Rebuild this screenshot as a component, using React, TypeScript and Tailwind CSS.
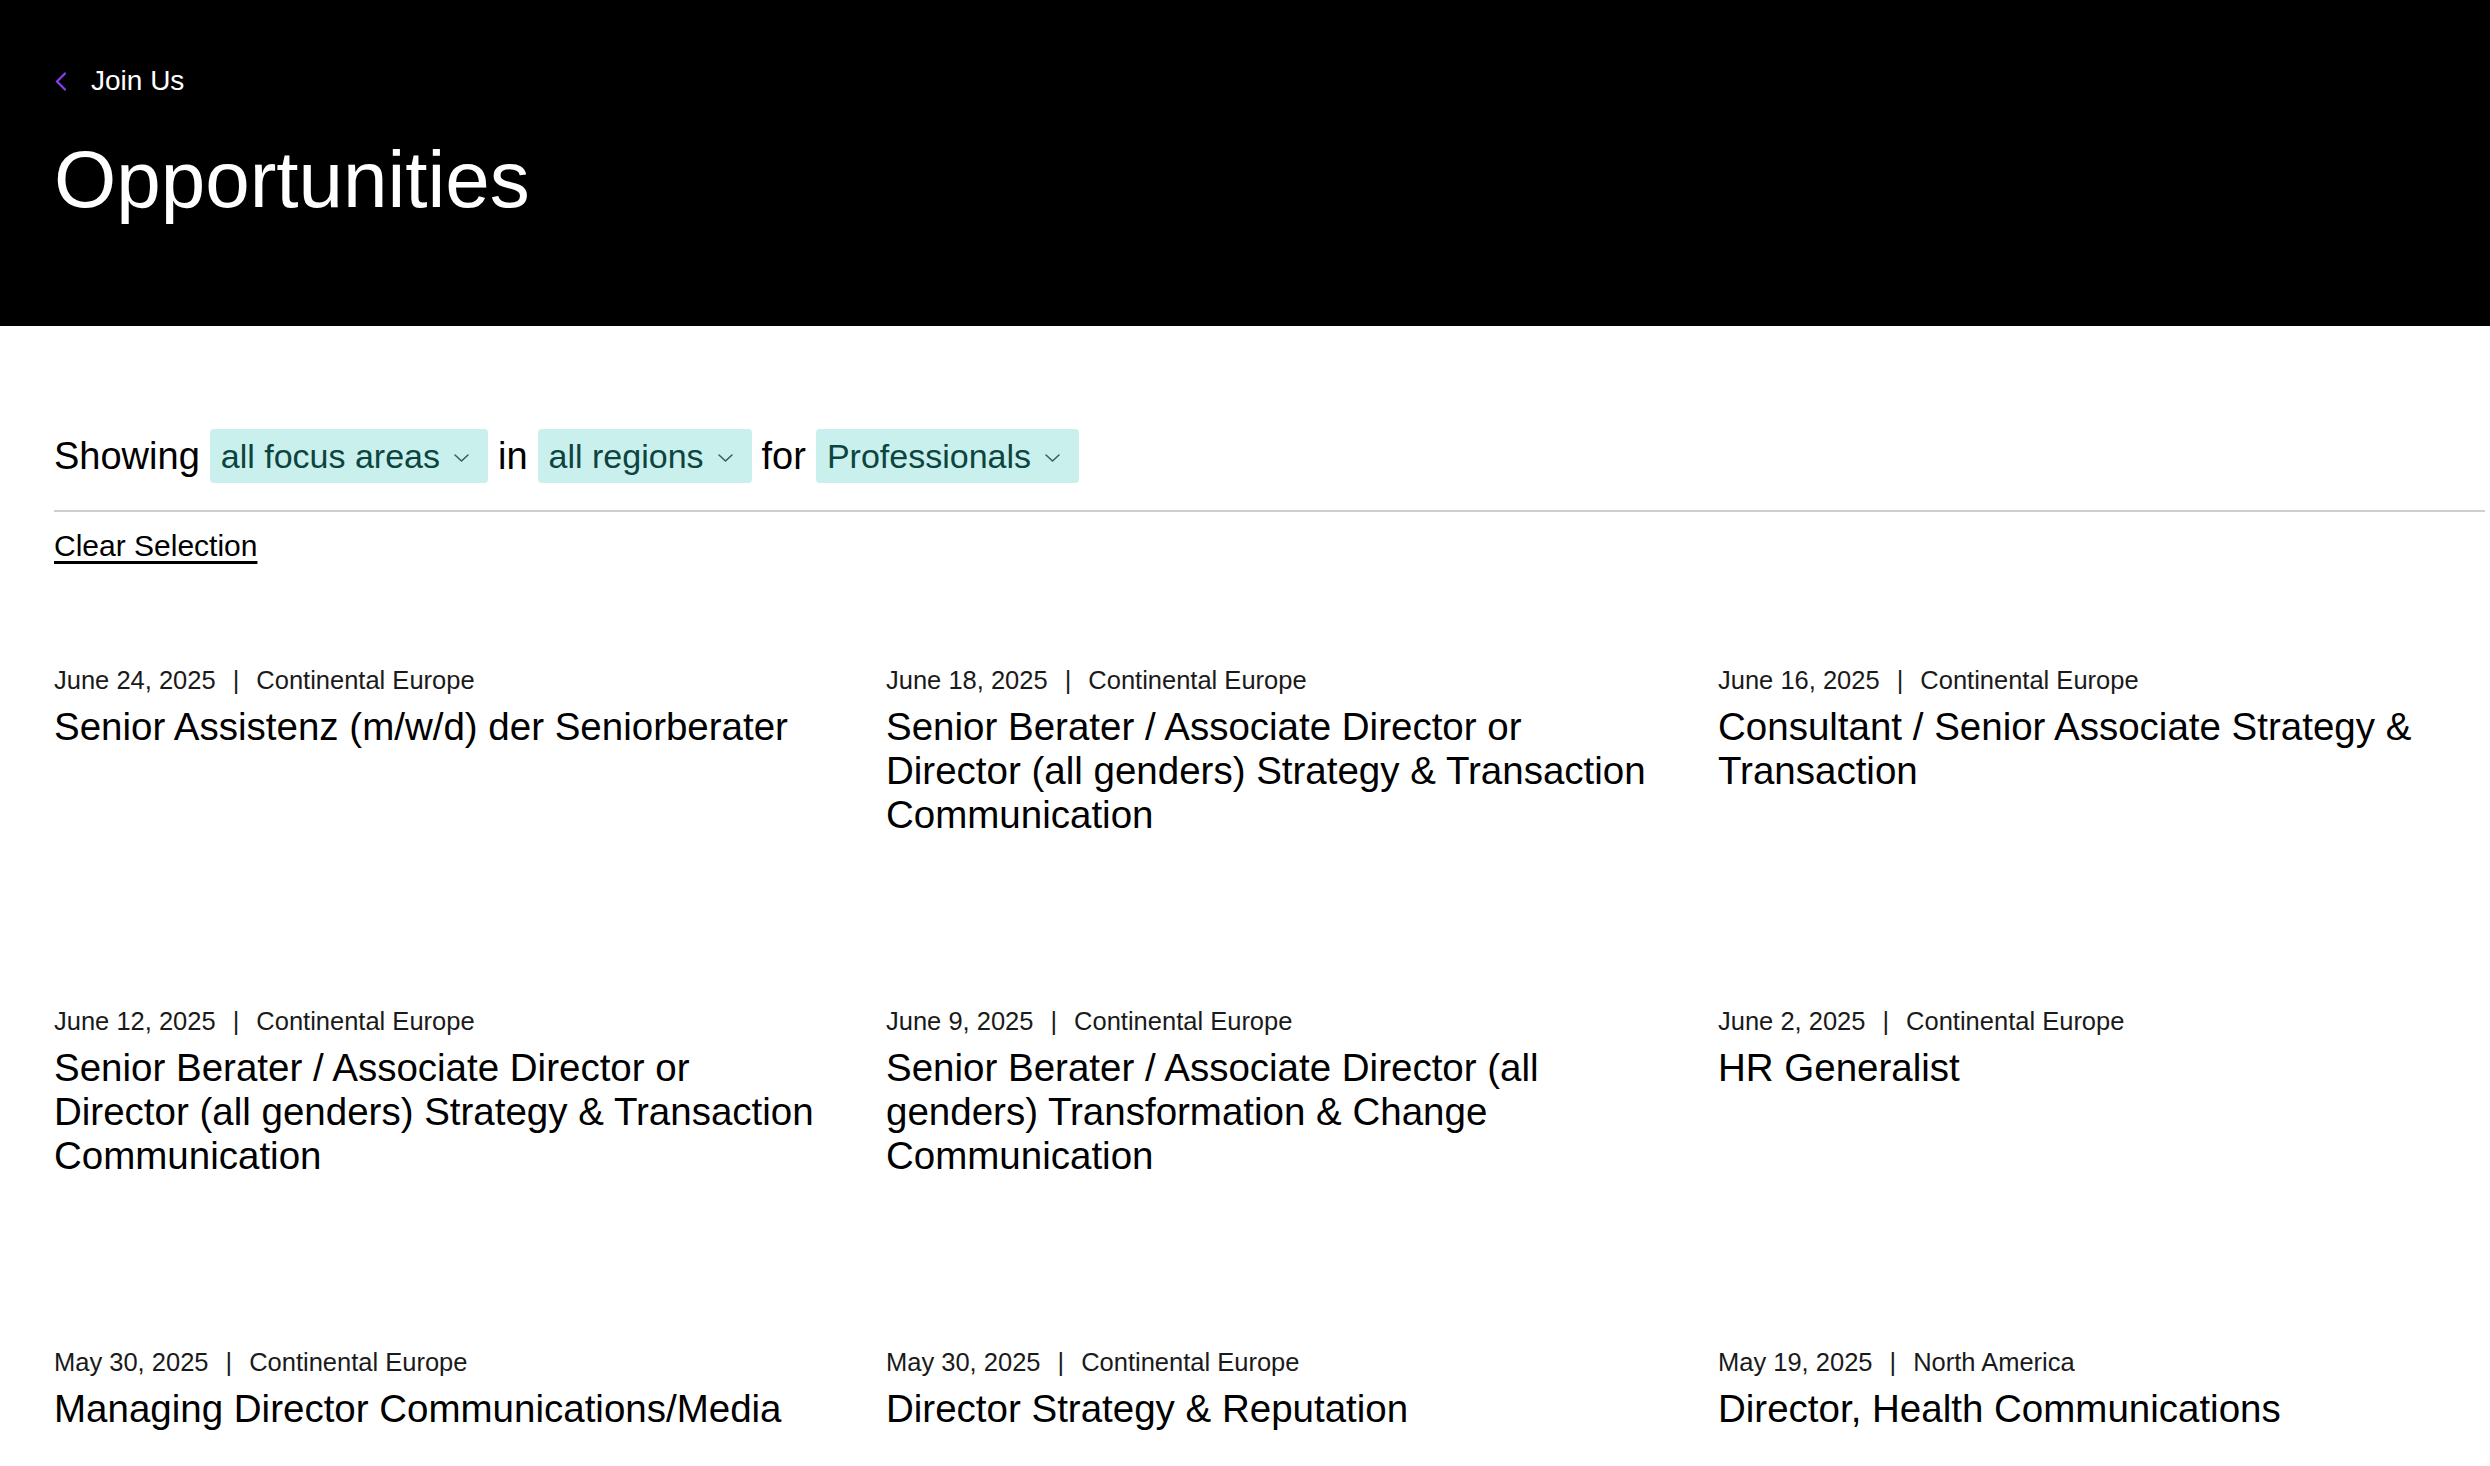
const jobs = [
  { date: 'June 24, 2025', region: 'Continental Europe', title: 'Senior Assistenz (m/w/d) der Seniorberater' },
  {
    date: 'June 18, 2025',
    region: 'Continental Europe',
    title: 'Senior Berater / Associate Director or Director (all genders) Strategy & Transaction Communication',
  },
  { date: 'June 16, 2025', region: 'Continental Europe', title: 'Consultant / Senior Associate Strategy & Transaction' },
  {
    date: 'June 12, 2025',
    region: 'Continental Europe',
    title: 'Senior Berater / Associate Director or Director (all genders) Strategy & Transaction Communication',
  },
  {
    date: 'June 9, 2025',
    region: 'Continental Europe',
    title: 'Senior Berater / Associate Director (all genders) Transformation & Change Communication',
  },
  { date: 'June 2, 2025', region: 'Continental Europe', title: 'HR Generalist' },
  { date: 'May 30, 2025', region: 'Continental Europe', title: 'Managing Director Communications/Media' },
  { date: 'May 30, 2025', region: 'Continental Europe', title: 'Director Strategy & Reputation' },
  { date: 'May 19, 2025', region: 'North America', title: 'Director, Health Communications' },
]

function Pill({ label }: { label: string }) {
  return (
    <button className="flex h-[54px] items-center gap-[14px] rounded-[4px] bg-[#caf0ed] pl-[11px] pr-[19px] text-[34px] leading-none text-[#0c4540]">
      <span>{label}</span>
      <svg width="15" height="8" viewBox="0 0 15 8" fill="none" className="mt-[4px]">
        <path d="M1 1l6.5 6L14 1" stroke="#2f5f5a" strokeWidth="1.5" strokeLinecap="round" strokeLinejoin="round" />
      </svg>
    </button>
  )
}

export default function App() {
  return (
    <div className="min-h-screen bg-white font-['Liberation_Sans',Arial,sans-serif] text-[#111]">
      <header className="h-[326px] bg-black px-[54px] pt-[62px]">
        <a href="#" className="flex items-center gap-[24px] text-[28px] leading-[38px] text-white">
          <svg width="13" height="19" viewBox="0 0 13 19" fill="none">
            <path d="M11 1.5L3 9.5l8 8" stroke="#8a3ff0" strokeWidth="2.2" strokeLinecap="round" strokeLinejoin="round" />
          </svg>
          <span>Join Us</span>
        </a>
        <h1 className="mt-[40px] text-[80px] leading-none text-white">Opportunities</h1>
      </header>

      <main className="pb-[120px] pl-[54px] pr-[5px] pt-[103px]">
        <div className="flex items-center gap-[10px] text-[38px] leading-none text-black">
          <span>Showing</span>
          <Pill label="all focus areas" />
          <span>in</span>
          <Pill label="all regions" />
          <span>for</span>
          <Pill label="Professionals" />
        </div>
        <div className="mt-[27px] h-[2px] bg-[#cfcfcf]" />
        <a href="#" className="mt-[16px] inline-block text-[30px] leading-[36px] text-black underline underline-offset-[5px]">
          Clear Selection
        </a>

        <ul className="mt-[100px] grid grid-cols-3 gap-x-[65px] gap-y-[168px]">
          {jobs.map((job, i) => (
            <li key={i}>
              <p className="text-[25.5px] leading-[32px] text-[#1a1a1a]">
                {job.date}
                <span className="mx-[17px]">|</span>
                {job.region}
              </p>
              <h2 className="mt-[9px] text-[38.5px] leading-[44px] text-black">{job.title}</h2>
            </li>
          ))}
        </ul>
      </main>
    </div>
  )
}
